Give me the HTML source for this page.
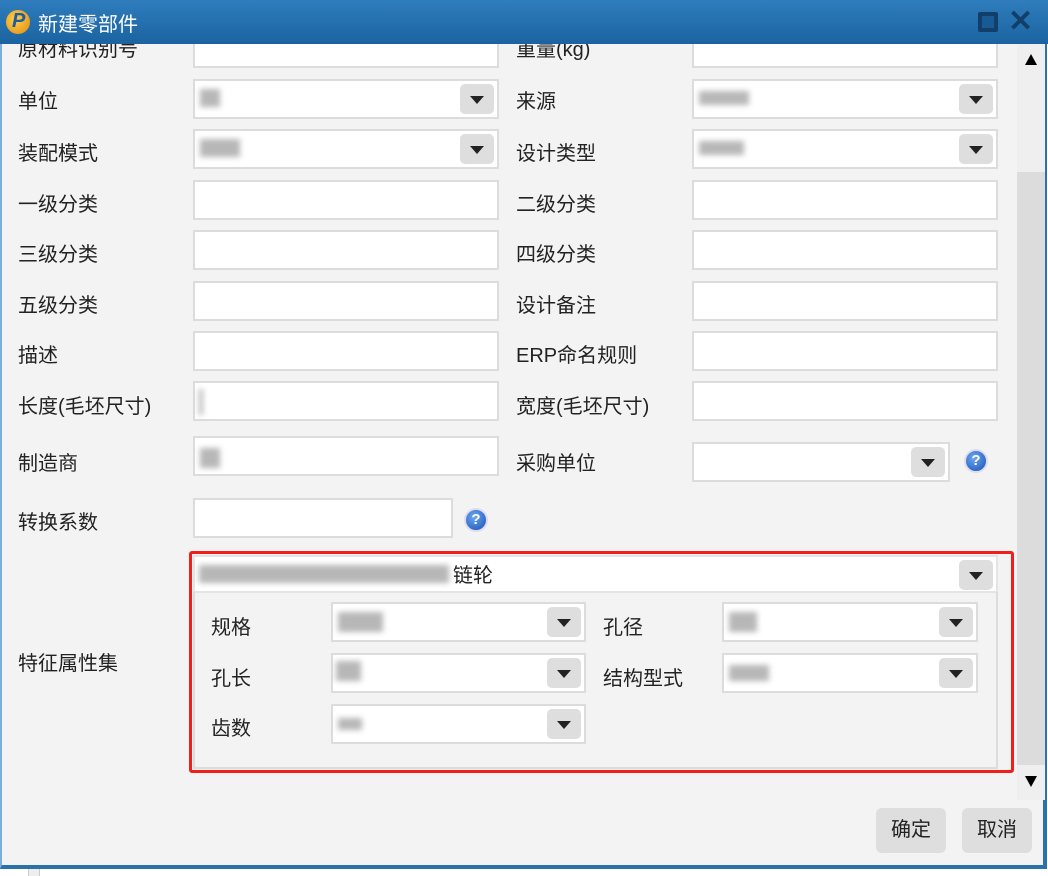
<!DOCTYPE html>
<html><head><meta charset="utf-8"><style>
*{box-sizing:border-box;margin:0;padding:0}
body{width:1048px;height:876px;background:#fff;position:relative;overflow:hidden;font-family:"Liberation Sans","Noto Sans CJK SC",sans-serif;font-size:20px;color:#222}
.win{position:absolute;left:0;top:0;width:1047px;height:869px;background:#f3f3f3;border-left:2px solid #7aaedb;border-right:4px solid #2a72ac;border-bottom:4px solid #2a72ac}
.title{position:absolute;left:0;top:0;width:1048px;height:44px;background:linear-gradient(#2f7dbd,#1b63a0);color:#fff;z-index:5}
.title span{position:absolute;left:38px;top:8px;font-size:20px}
.logo{position:absolute;left:6px;top:10px;width:24px;height:24px;border-radius:50%;background:radial-gradient(circle at 40% 40%,#ffcf4a,#e08a10);}
.logo b{position:absolute;left:6px;top:0;color:#1c5da0;font-size:20px;font-weight:bold;font-style:italic}
.lbl{position:absolute;font-size:20px;color:#222;white-space:nowrap;margin-top:-3px}
.in{position:absolute;height:40px;background:#fff;border:2px solid #dcdcdc}
.dd{position:absolute;right:3px;top:3px;width:34px;height:30px;background:#dedede;border-radius:5px}
.dd:after{content:"";position:absolute;left:10px;top:12px;border-left:7px solid transparent;border-right:7px solid transparent;border-top:8px solid #222}
.blur{position:absolute;background:#999;filter:blur(3px);opacity:.7}
.q{position:absolute;width:24px;height:24px;border-radius:50%;background:radial-gradient(circle at 40% 35%,#6aa8f0,#1a4fb8);border:2px solid #dde;color:#fff;font-size:15px;font-weight:bold;text-align:center;line-height:20px}
.btn{position:absolute;top:808px;width:70px;height:45px;background:#dedede;border-radius:6px;text-align:center;line-height:45px;font-size:20px}
</style></head><body>
<div class="win">
<div style="position:absolute;left:1015px;top:44px;width:28px;height:756px;background:#efefef"></div>
<div style="position:absolute;left:1015px;top:172px;width:28px;height:593px;background:#dcdcdc"></div>
<div style="position:absolute;left:1023px;top:54px;border-left:6px solid transparent;border-right:6px solid transparent;border-bottom:11px solid #000"></div>
<div style="position:absolute;left:1023px;top:776px;border-left:6px solid transparent;border-right:6px solid transparent;border-top:11px solid #000"></div>
</div>
<div class="title"><div class="logo"><b>P</b></div><span>新建零部件</span>
<div style="position:absolute;left:978px;top:12px;width:20px;height:20px;border:4px solid #123f6a;border-radius:2px;background:#1a5a94"></div>
<div style="position:absolute;left:1008px;top:4px;font-size:30px;font-weight:bold;color:#123f6a">✕</div>
</div>

<div class="lbl" style="left:18px;top:36px">原材料识别号</div><div class="in" style="left:193px;top:28px;width:306px"></div>
<div class="lbl" style="left:516px;top:36px">重量(kg)</div><div class="in" style="left:692px;top:28px;width:306px"></div>

<div class="lbl" style="left:18px;top:88px">单位</div><div class="in" style="left:193px;top:79px;width:306px"><div class="dd"></div><div class="blur" style="left:5px;top:8px;width:20px;height:18px"></div></div>
<div class="lbl" style="left:516px;top:88px">来源</div><div class="in" style="left:692px;top:79px;width:306px"><div class="dd"></div><div class="blur" style="left:5px;top:10px;width:50px;height:14px"></div></div>
<div class="lbl" style="left:18px;top:140px">装配模式</div><div class="in" style="left:193px;top:129px;width:306px"><div class="dd"></div><div class="blur" style="left:5px;top:8px;width:40px;height:18px"></div></div>
<div class="lbl" style="left:516px;top:140px">设计类型</div><div class="in" style="left:692px;top:129px;width:306px"><div class="dd"></div><div class="blur" style="left:5px;top:10px;width:45px;height:14px"></div></div>
<div class="lbl" style="left:18px;top:191px">一级分类</div><div class="in" style="left:193px;top:180px;width:306px"></div>
<div class="lbl" style="left:516px;top:191px">二级分类</div><div class="in" style="left:692px;top:180px;width:306px"></div>
<div class="lbl" style="left:18px;top:241px">三级分类</div><div class="in" style="left:193px;top:230px;width:306px"></div>
<div class="lbl" style="left:516px;top:241px">四级分类</div><div class="in" style="left:692px;top:230px;width:306px"></div>
<div class="lbl" style="left:18px;top:292px">五级分类</div><div class="in" style="left:193px;top:281px;width:306px"></div>
<div class="lbl" style="left:516px;top:292px">设计备注</div><div class="in" style="left:692px;top:281px;width:306px"></div>
<div class="lbl" style="left:18px;top:342px">描述</div><div class="in" style="left:193px;top:331px;width:306px"></div>
<div class="lbl" style="left:516px;top:342px">ERP命名规则</div><div class="in" style="left:692px;top:331px;width:306px"></div>
<div class="lbl" style="left:18px;top:393px">长度(毛坯尺寸)</div><div class="in" style="left:193px;top:381px;width:306px"><div class="blur" style="left:4px;top:6px;width:4px;height:26px"></div></div>
<div class="lbl" style="left:516px;top:393px">宽度(毛坯尺寸)</div><div class="in" style="left:692px;top:381px;width:306px"></div>
<div class="lbl" style="left:18px;top:450px">制造商</div><div class="in" style="left:193px;top:436px;width:306px"><div class="blur" style="left:5px;top:10px;width:20px;height:20px"></div></div>
<div class="lbl" style="left:516px;top:450px">采购单位</div><div class="in" style="left:692px;top:442px;width:258px"><div class="dd"></div></div>
<div class="q" style="left:964px;top:449px">?</div>
<div class="lbl" style="left:18px;top:509px">转换系数</div><div class="in" style="left:193px;top:498px;width:260px"></div>
<div class="q" style="left:464px;top:508px">?</div>

<div class="lbl" style="left:18px;top:650px">特征属性集</div>
<div style="position:absolute;left:189px;top:551px;width:825px;height:222px;border:3px solid #f01f1a;border-radius:3px"></div>
<div class="in" style="left:193px;top:555px;width:805px;height:38px;border-color:#e4e4e4"><div class="dd"></div><div class="blur" style="left:4px;top:8px;width:250px;height:18px"></div><span style="position:absolute;left:258px;top:2px">链轮</span></div>
<div style="position:absolute;left:193px;top:592px;width:805px;height:177px;border:2px solid #dcdcdc;border-top:none"></div>
<div class="lbl" style="left:211px;top:614px">规格</div><div class="in" style="left:331px;top:602px;width:255px"><div class="dd"></div><div class="blur" style="left:5px;top:8px;width:45px;height:20px"></div></div>
<div class="lbl" style="left:603px;top:614px">孔径</div><div class="in" style="left:722px;top:602px;width:256px"><div class="dd"></div><div class="blur" style="left:5px;top:8px;width:28px;height:20px"></div></div>
<div class="lbl" style="left:211px;top:665px">孔长</div><div class="in" style="left:331px;top:653px;width:255px"><div class="dd"></div><div class="blur" style="left:3px;top:6px;width:25px;height:20px"></div></div>
<div class="lbl" style="left:603px;top:665px">结构型式</div><div class="in" style="left:722px;top:653px;width:256px"><div class="dd"></div><div class="blur" style="left:5px;top:10px;width:40px;height:16px"></div></div>
<div class="lbl" style="left:211px;top:715px">齿数</div><div class="in" style="left:331px;top:704px;width:255px"><div class="dd"></div><div class="blur" style="left:5px;top:12px;width:24px;height:12px"></div></div>

<div class="btn" style="left:876px">确定</div>
<div class="btn" style="left:962px">取消</div>
<div style="position:absolute;left:28px;top:869px;width:12px;height:7px;background:#eee;border-left:1px solid #ccc;border-right:1px solid #ccc"></div>
</body></html>
